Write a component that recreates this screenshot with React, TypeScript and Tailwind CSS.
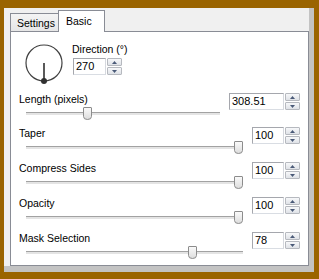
import React from 'react';

const font = "font-['Liberation_Sans',Arial,sans-serif]";

function Arrow({ up }: { up?: boolean }) {
    return (
        <svg width="5" height="3" viewBox="0 0 5 3">
            <path d={up ? 'M0 3 L2.5 0 L5 3 Z' : 'M0 0 L2.5 3 L5 0 Z'} fill="#4a5a78" />
        </svg>
    );
}

function SpinBox({ value, boxClass }: { value: string; boxClass: string }) {
    return (
        <div className="flex h-[17px] shrink-0">
            <div
                className={`${boxClass} h-[17px] border border-[#a5a7ad] border-b-[#d9dde3] border-r-[#d5d8de] bg-white pl-[2px] text-[11px] leading-[15px] text-black`}
            >
                {value}
            </div>
            <div className="ml-px flex w-[15px] flex-col gap-px">
                <div className="flex flex-1 items-center justify-center rounded-[1px] border border-[#b6b9bf] bg-linear-to-b from-[#f7f8fa] to-[#dfe2e7]">
                    <Arrow up />
                </div>
                <div className="flex flex-1 items-center justify-center rounded-[1px] border border-[#b6b9bf] bg-linear-to-b from-[#f7f8fa] to-[#dfe2e7]">
                    <Arrow />
                </div>
            </div>
        </div>
    );
}

function Slider({ pct }: { pct: number }) {
    return (
        <div className="relative ml-[7px] mr-[9px] mt-[2px] h-[13px]">
            <div className="absolute left-0 right-0 top-[5px] h-[3px] border-t border-[#a2a2a2] bg-[#e4e4e4]" />
            <div className="absolute top-0" style={{ left: `calc(${pct} * (100% - 9px))` }}>
                <svg width="9" height="13" viewBox="0 0 9 13">
                    <defs>
                        <linearGradient id="thumb" x1="0" y1="0" x2="0" y2="1">
                            <stop offset="0" stopColor="#fbfbfb" />
                            <stop offset="1" stopColor="#dcdcdc" />
                        </linearGradient>
                    </defs>
                    <path
                        d="M0.5 1 Q0.5 0.5 1 0.5 H8 Q8.5 0.5 8.5 1 V9.5 Q8.5 12.5 4.5 12.5 Q0.5 12.5 0.5 9.5 Z"
                        fill="url(#thumb)"
                        stroke="#8c8c8c"
                    />
                </svg>
            </div>
        </div>
    );
}

function Row({ label, value, pct, boxClass, rowClass }: { label: string; value: string; pct: number; boxClass: string; rowClass: string }) {
    return (
        <div className={`flex ${rowClass}`}>
            <div className="flex flex-1 flex-col pl-[8px]">
                <span className="h-[12px] leading-[12px]">{label}</span>
                <Slider pct={pct} />
            </div>
            <SpinBox value={value} boxClass={boxClass} />
        </div>
    );
}

export default function App() {
    return (
        <div className={`h-[279px] w-[319px] bg-[#9a6400] pb-[7px] pl-[4px] pr-[5px] pt-[8px] text-[10.5px] text-black ${font}`}>
            <div className="flex h-full flex-col border-b-[6px] border-r-[5px] border-[#c3c3c3] bg-[#f0f0f0] pl-[6px]">
                {/* tabs */}
                <div className="flex h-[23px] items-end">
                    <div className="h-[18px] w-[49px] border border-b-0 border-[#898c95] bg-linear-to-b from-[#f4f4f4] to-[#e6e6e6] pl-[6px] pt-[3px] leading-[12px]">
                        Settings
                    </div>
                    <div className="relative z-10 -mb-px -ml-px h-[22px] w-[47px] border border-b-0 border-[#898c95] bg-white pl-[7px] pt-[4px] leading-[12px]">
                        Basic
                    </div>
                </div>

                {/* page */}
                <div className="flex flex-1 flex-col overflow-hidden border border-[#898c95] bg-white pr-[8px]">
                    <div className="flex h-[61px] shrink-0">
                        <svg className="ml-[12px] mt-[10px]" width="42" height="42" viewBox="0 0 42 42">
                            <circle cx="21" cy="21" r="18" fill="none" stroke="#404040" strokeWidth="1.2" />
                            <line x1="21" y1="21" x2="21" y2="39" stroke="#303030" strokeWidth="1.6" />
                            <circle cx="21" cy="39" r="3" fill="#303030" />
                        </svg>
                        <div className="ml-[7px] mt-[11px] flex flex-col">
                            <span className="h-[12px] leading-[12px]">Direction (°)</span>
                            <div className="ml-px mt-[3px]">
                                <SpinBox value="270" boxClass="w-[33px]" />
                            </div>
                        </div>
                    </div>

                    <Row label="Length (pixels)" value="308.51" pct={0.31} boxClass="w-[55px]" rowClass="h-[34px] shrink-0" />
                    <Row label="Taper" value="100" pct={1} boxClass="w-[32px]" rowClass="h-[35px] shrink-0" />
                    <Row label="Compress Sides" value="100" pct={1} boxClass="w-[32px]" rowClass="h-[35px] shrink-0" />
                    <Row label="Opacity" value="100" pct={1} boxClass="w-[32px]" rowClass="h-[35px] shrink-0" />
                    <Row label="Mask Selection" value="78" pct={0.78} boxClass="w-[32px]" rowClass="h-[35px] shrink-0" />
                </div>
            </div>
        </div>
    );
}
